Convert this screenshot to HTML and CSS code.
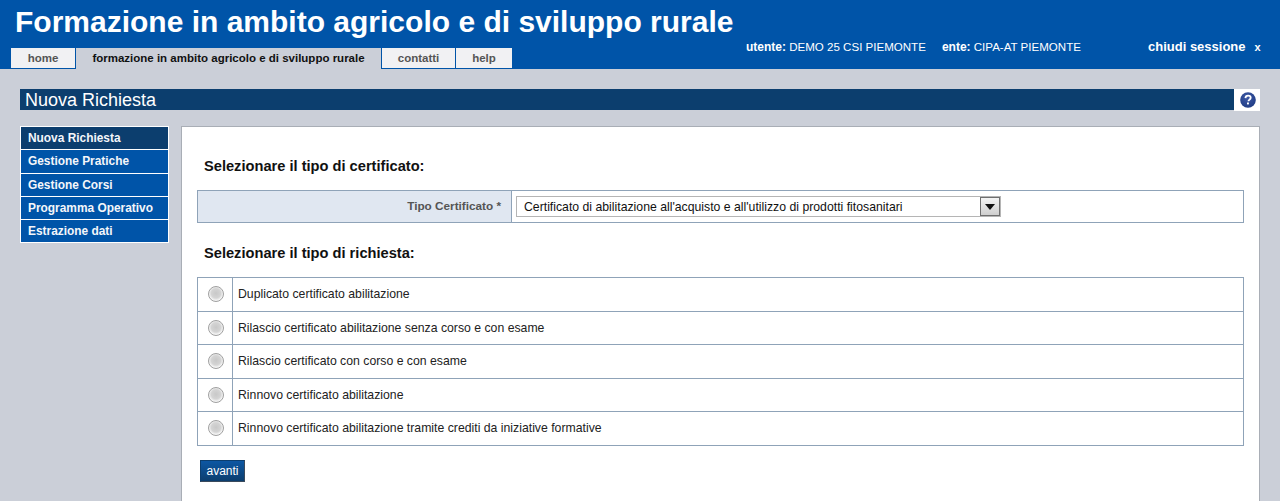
FILE: index.html
```html
<!DOCTYPE html>
<html lang="it">
<head>
<meta charset="utf-8">
<title>Formazione in ambito agricolo e di sviluppo rurale</title>
<link rel="stylesheet" href="styles.css">
</head>
<body>
<header class="header">
  <h1 class="app-title">Formazione in ambito agricolo e di sviluppo rurale</h1>
  <div class="header-bar">
    <nav class="tabs">
      <a class="tab tab-home">home</a>
      <a class="tab tab-active">formazione in ambito agricolo e di sviluppo rurale</a>
      <a class="tab tab-contatti">contatti</a>
      <a class="tab tab-help">help</a>
    </nav>
    <div class="user-info">
      <span class="user-item"><b class="user-key">utente:</b> DEMO 25 CSI PIEMONTE</span>
      <span class="user-item"><b class="user-key">ente:</b> CIPA-AT PIEMONTE</span>
    </div>
    <a class="logout"><span>chiudi sessione</span><span class="logout-x">x</span></a>
  </div>
</header>
<div class="page">
  <div class="page-title">
    <h2 class="page-title-text">Nuova Richiesta</h2>
    <div class="help-box">
      <svg width="16" height="16" viewBox="0 0 16 16" aria-hidden="true">
        <defs><radialGradient id="hg" cx="45%" cy="35%" r="70%"><stop offset="0" stop-color="#3f5aa6"/><stop offset="1" stop-color="#1d3a83"/></radialGradient></defs>
        <circle cx="8" cy="8" r="7.8" fill="url(#hg)"/>
        <path d="M5.4 6.1C5.5 4.5 6.6 3.6 8.1 3.6c1.500 0 2.600.9 2.600 2.200 0 1-.6 1.500-1.300 2-.6.4-.9.700-.9 1.500" fill="none" stroke="#fff" stroke-width="1.800"/>
        <rect x="7" y="10.500" width="1.900" height="1.900" fill="#fff"/>
      </svg>
    </div>
  </div>
  <div class="columns">
    <ul class="side-menu">
      <li class="side-item side-active">Nuova Richiesta</li>
      <li class="side-item side-tall">Gestione Pratiche</li>
      <li class="side-item">Gestione Corsi</li>
      <li class="side-item">Programma Operativo</li>
      <li class="side-item">Estrazione dati</li>
    </ul>
    <main class="content">
      <h3 class="section-title">Selezionare il tipo di certificato:</h3>
      <div class="cert-row">
        <div class="cert-label">Tipo Certificato *</div>
        <div class="cert-field">
          <div class="fake-select">
            <span class="fake-select-text">Certificato di abilitazione all'acquisto e all'utilizzo di prodotti fitosanitari</span>
            <span class="fake-select-btn"><svg width="10" height="6" viewBox="0 0 10 6" aria-hidden="true"><path d="M0 0h10L5 6z" fill="#111"/></svg></span>
          </div>
        </div>
      </div>
      <h3 class="section-title section-title-2">Selezionare il tipo di richiesta:</h3>
      <div class="radio-table">
        <label class="radio-row"><span class="radio-cell"><input class="radio" type="radio" name="r"></span><span class="radio-text">Duplicato certificato abilitazione</span></label>
        <label class="radio-row"><span class="radio-cell"><input class="radio" type="radio" name="r"></span><span class="radio-text">Rilascio certificato abilitazione senza corso e con esame</span></label>
        <label class="radio-row"><span class="radio-cell"><input class="radio" type="radio" name="r"></span><span class="radio-text">Rilascio certificato con corso e con esame</span></label>
        <label class="radio-row"><span class="radio-cell"><input class="radio" type="radio" name="r"></span><span class="radio-text">Rinnovo certificato abilitazione</span></label>
        <label class="radio-row"><span class="radio-cell"><input class="radio" type="radio" name="r"></span><span class="radio-text">Rinnovo certificato abilitazione tramite crediti da iniziative formative</span></label>
      </div>
      <button class="btn" type="button">avanti</button>
    </main>
  </div>
</div>
</body>
</html>
```
FILE: styles.css
```css
* { box-sizing: border-box; }
html, body { margin: 0; height: 100%; overflow: hidden; }
body {
  background: #cbcfd8;
  font-family: "Liberation Sans", Arial, sans-serif;
  font-size: 12px;
  color: #111;
}
.header {
  background: #0054a8;
  height: 69px;
  padding-left: 11px;
  color: #fff;
}
.app-title {
  margin: 0;
  padding: 4px 0 0 4px;
  height: 48px;
  font-size: 30px;
  line-height: 36px;
  font-weight: bold;
  white-space: nowrap;
}
.header-bar { display: flex; align-items: flex-start; }
.tabs { display: flex; width: 735px; height: 21px; }
.tab {
  display: block;
  height: 20px;
  line-height: 20px;
  background: #f1f1f3;
  color: #555;
  font-size: 11.5px;
  font-weight: bold;
  text-align: center;
  border-right: 1px solid #0054a8;
}
.tab-home { width: 65px; }
.tab-active {
  width: 306px;
  height: 21px;
  background: #cbcfd8;
  color: #111;
  border-right: 1px solid #0054a8;
}
.tab-contatti { width: 74px; }
.tab-help { width: 56px; border-right: 0; }
.user-info {
  width: 402px;
  margin-top: -8px;
  display: flex;
  gap: 16px;
  font-size: 11.55px;
  line-height: 14px;
}
.user-key { font-size: 12px; }
.logout {
  margin-top: -9px;
  display: flex;
  gap: 9px;
  font-size: 13px;
  line-height: 16px;
  font-weight: bold;
}
.logout-x { font-size: 11px; }
.page { padding: 20px 20px 0; }
.page-title { display: flex; align-items: flex-start; }
.page-title-text {
  flex: 1;
  margin: 0;
  height: 21px;
  padding: 1px 0 0 5px;
  background: #0c3e6e;
  color: #fff;
  font-size: 18px;
  line-height: 21px;
  font-weight: normal;
}
.help-box {
  width: 26px;
  height: 22px;
  background: #fff;
  display: flex;
  align-items: center;
  justify-content: center;
  padding-left: 1px;
}
.columns { display: flex; align-items: flex-start; gap: 12px; margin-top: 15px; }
.side-menu {
  list-style: none;
  margin: 0;
  padding: 0;
  width: 149px;
  border: 1px solid #fff;
  flex: none;
}
.side-item {
  height: 23px;
  line-height: 23px;
  padding-left: 7px;
  background: #0054a8;
  border-bottom: 1px solid #fff;
  color: #f4f6fa;
  font-size: 11.9px;
  font-weight: bold;
}
.side-tall { height: 24px; }
.side-item:last-child { border-bottom: 0; height: 22px; }
.side-active { background: #0c3e6e; }
.content {
  flex: 1;
  height: 420px;
  background: #fff;
  border: 1px solid #a9aeb6;
  padding: 30px 15px 0;
}
.section-title {
  margin: 0 0 0 7px;
  font-size: 14.65px;
  line-height: 16px;
  padding-top: 1px;
  height: 17px;
  font-weight: bold;
  color: #111;
}
.section-title-2 { margin-top: 21px; }
.cert-row {
  display: flex;
  height: 33px;
  margin-top: 16px;
  border: 1px solid #8fa3b8;
}
.cert-label {
  width: 314px;
  padding-right: 10px;
  background: #e0e7f1;
  border-right: 1px solid #8fa3b8;
  text-align: right;
  font-size: 11.75px;
  font-weight: bold;
  color: #555;
  line-height: 30px;
}
.cert-field { flex: 1; padding: 5px 0 0 4px; }
.fake-select {
  display: flex;
  justify-content: space-between;
  width: 485px;
  height: 21px;
  border: 1px solid #b5b5b5;
  background: #fff;
  font-size: 12.25px;
}
.fake-select-text { padding-left: 7px; line-height: 20px; white-space: nowrap; }
.fake-select-btn {
  width: 20px;
  height: 19px;
  background: linear-gradient(#f4f4f4, #cfcfcf);
  border: 1px solid #6f6f6f;
  display: flex;
  align-items: center;
  justify-content: center;
}
.radio-table {
  margin-top: 16px;
  border: 1px solid #8fa3b8;
  border-bottom: 0;
}
.radio-row {
  display: flex;
  height: 33.5px;
  border-bottom: 1px solid #8fa3b8;
}
.radio-cell {
  width: 35px;
  padding-left: 2px;
  border-right: 1px solid #8fa3b8;
  display: flex;
  align-items: center;
  justify-content: center;
}
.radio {
  appearance: none;
  width: 16px;
  height: 16px;
  margin: 0;
  border-radius: 50%;
  border: 1px solid #a0a0a0;
  background: radial-gradient(circle at 50% 45%, #c8c8c8 0, #d4d4d4 45%, #f6f6f6 68%, #f2f2f2 85%, #dcdcdc 100%);
}
.radio-text { padding-left: 5px; font-size: 12.25px; line-height: 33px; color: #222; }
.btn {
  display: block;
  margin: 14px 0 0 3px;
  width: 45px;
  height: 22px;
  padding: 0;
  background: linear-gradient(#0d57a3, #0c3e6e);
  border: 1px solid #0c3e6e;
  border-right-color: #3a4a5c;
  border-bottom-color: #3a4a5c;
  color: #fff;
  font-family: "Liberation Sans", Arial, sans-serif;
  font-size: 12px;
}
```
